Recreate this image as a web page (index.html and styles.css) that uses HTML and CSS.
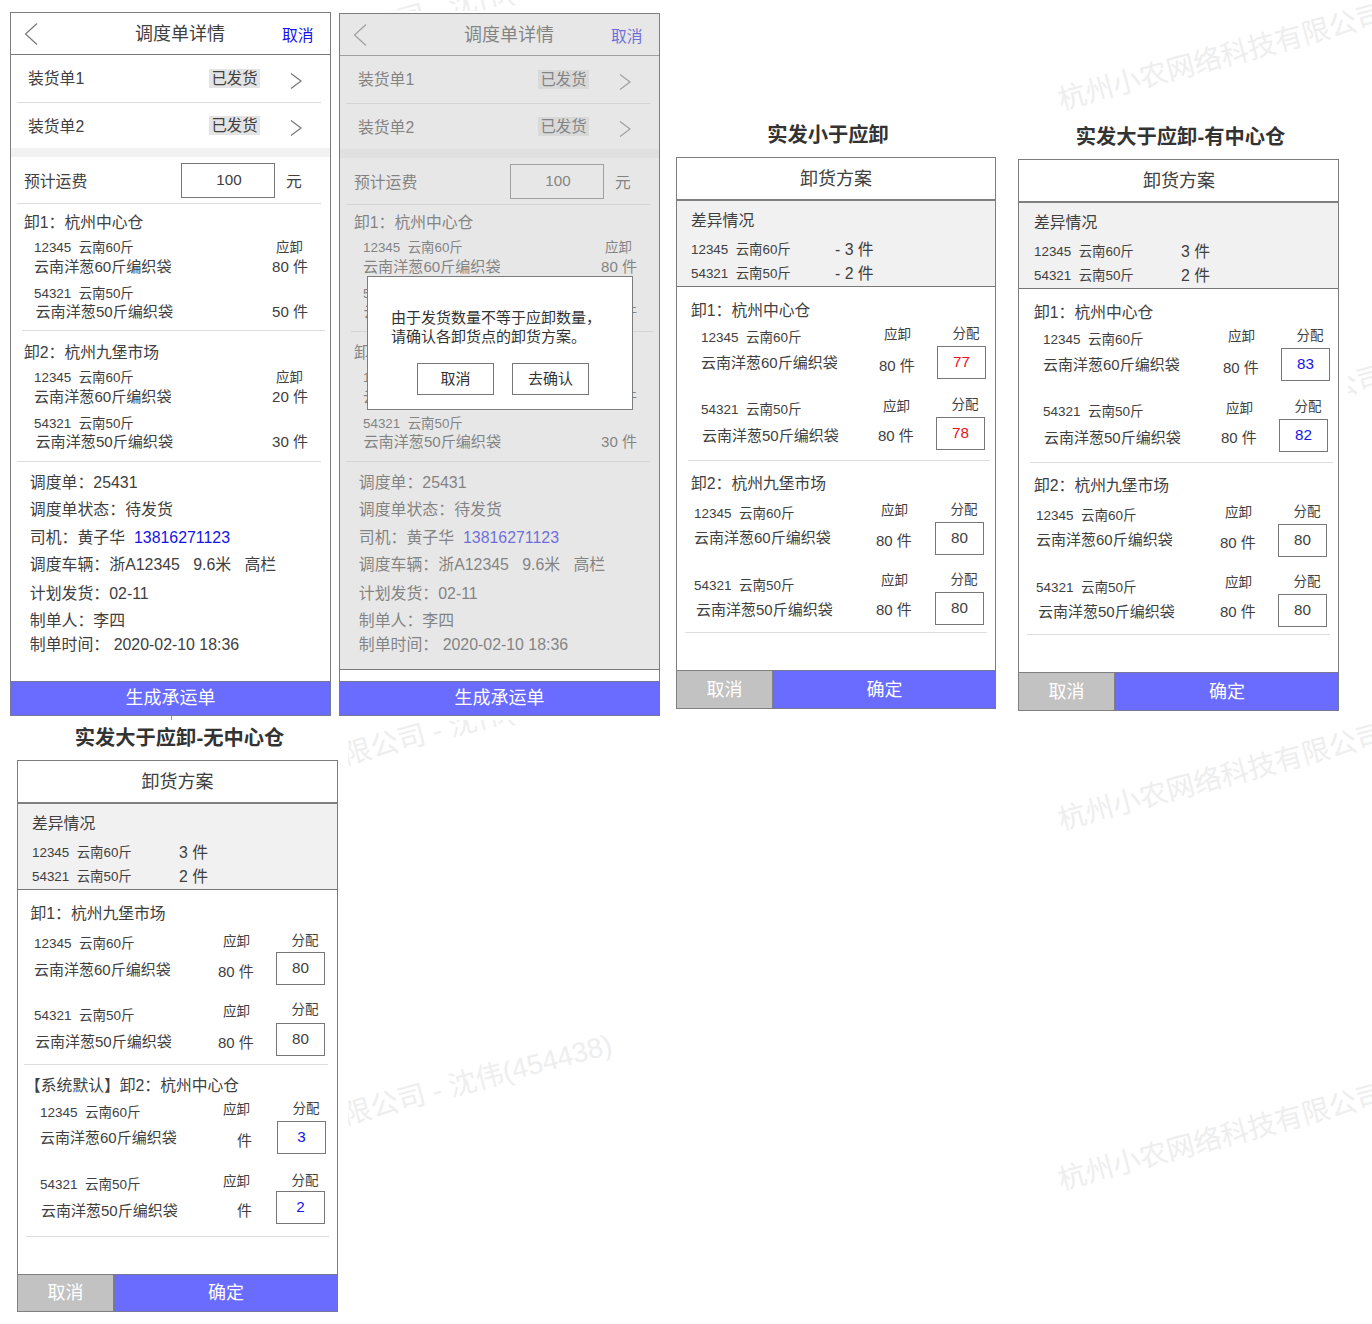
FILE: index.html
```html
<!DOCTYPE html>
<html lang="zh-CN">
<head>
<meta charset="utf-8">
<title>调度单详情</title>
<link rel="stylesheet" href="styles.css">
</head>
<body>
<div class="marks" aria-hidden="true">
  <div class="clip clip-top"><span class="mark">限公司 - 沈伟(454438)</span></div>
  <div class="clip clip-left"><span class="mark m1">限公司 - 沈伟(454438)</span><span class="mark m2">限公司 - 沈伟(454438)</span></div>
  <div class="clip clip-right"><span class="mark m1">杭州小农网络科技有限公司</span><span class="mark m2">杭州小农网络科技有限公司</span><span class="mark m3">杭州小农网络科技有限公司</span></div>
  <div class="clip clip-edge"><span class="mark">公司</span></div>
</div>

<main class="canvas">
  <div class="boards">
    <section class="phone order">
      <header class="bar">
        <svg class="back" viewBox="0 0 14 22"><path d="M13 .5 1.500 11 13 21.500"/></svg>
        <h2>调度单详情</h2><a class="cancel">取消</a>
      </header>
      <div class="load"><span>装货单1</span><em>已发货</em><svg class="go" viewBox="0 0 12 16"><path d="M1 .5 11 8 1 15.500"/></svg></div>
      <div class="load last"><span>装货单2</span><em>已发货</em><svg class="go" viewBox="0 0 12 16"><path d="M1 .5 11 8 1 15.500"/></svg></div>
      <div class="band"></div>
      <div class="fee"><span>预计运费</span><b>100</b><span>元</span></div>
      <div class="stop first">
        <h3>卸1：杭州中心仓</h3>
        <p class="code"><span>12345&nbsp; 云南60斤</span><span class="due">应卸</span></p>
        <p class="prod"><span>云南洋葱60斤编织袋</span><span class="qty">80 件</span></p>
        <p class="code two"><span>54321&nbsp; 云南50斤</span></p>
        <p class="prod two"><span>云南洋葱50斤编织袋</span><span class="qty">50 件</span></p>
      </div>
      <div class="stop second">
        <h3>卸2：杭州九堡市场</h3>
        <p class="code"><span>12345&nbsp; 云南60斤</span><span class="due">应卸</span></p>
        <p class="prod"><span>云南洋葱60斤编织袋</span><span class="qty">20 件</span></p>
        <p class="code two"><span>54321&nbsp; 云南50斤</span></p>
        <p class="prod two"><span>云南洋葱50斤编织袋</span><span class="qty">30 件</span></p>
      </div>
      <div class="info">
        <p>调度单：25431</p><p>调度单状态：待发货</p>
        <p>司机：黄子华&nbsp; <a>13816271123</a></p>
        <p>调度车辆：浙A12345&nbsp;&nbsp; 9.6米&nbsp;&nbsp; 高栏</p>
        <p>计划发货：02-11</p><p>制单人：李四</p><p>制单时间： 2020-02-10 18:36</p>
      </div>
      <div class="submit">生成承运单</div>
      <i class="tick"></i>
    </section>

    <section class="phone order dimmed">
      <header class="bar">
        <svg class="back" viewBox="0 0 14 22"><path d="M13 .5 1.500 11 13 21.500"/></svg>
        <h2>调度单详情</h2><a class="cancel">取消</a>
      </header>
      <div class="load"><span>装货单1</span><em>已发货</em><svg class="go" viewBox="0 0 12 16"><path d="M1 .5 11 8 1 15.500"/></svg></div>
      <div class="load last"><span>装货单2</span><em>已发货</em><svg class="go" viewBox="0 0 12 16"><path d="M1 .5 11 8 1 15.500"/></svg></div>
      <div class="band"></div>
      <div class="fee"><span>预计运费</span><b>100</b><span>元</span></div>
      <div class="stop first">
        <h3>卸1：杭州中心仓</h3>
        <p class="code"><span>12345&nbsp; 云南60斤</span><span class="due">应卸</span></p>
        <p class="prod"><span>云南洋葱60斤编织袋</span><span class="qty">80 件</span></p>
        <p class="code two"><span>54321&nbsp; 云南50斤</span></p>
        <p class="prod two"><span>云南洋葱50斤编织袋</span><span class="qty">50 件</span></p>
      </div>
      <div class="stop second">
        <h3>卸2：杭州九堡市场</h3>
        <p class="code"><span>12345&nbsp; 云南60斤</span><span class="due">应卸</span></p>
        <p class="prod"><span>云南洋葱60斤编织袋</span><span class="qty">20 件</span></p>
        <p class="code two"><span>54321&nbsp; 云南50斤</span></p>
        <p class="prod two"><span>云南洋葱50斤编织袋</span><span class="qty">30 件</span></p>
      </div>
      <div class="info">
        <p>调度单：25431</p><p>调度单状态：待发货</p>
        <p>司机：黄子华&nbsp; <a>13816271123</a></p>
        <p>调度车辆：浙A12345&nbsp;&nbsp; 9.6米&nbsp;&nbsp; 高栏</p>
        <p>计划发货：02-11</p><p>制单人：李四</p><p>制单时间： 2020-02-10 18:36</p>
      </div>
      <div class="submit">生成承运单</div>
      <div class="shade"></div>
      <div class="dialog">
        <p>由于发货数量不等于应卸数量，<br>请确认各卸货点的卸货方案。</p>
        <div class="choices"><span>取消</span><span>去确认</span></div>
      </div>
    </section>

    <section class="board less">
      <h1>实发小于应卸</h1>
      <div class="phone plan">
        <h2>卸货方案</h2>
        <div class="diff">
          <h3>差异情况</h3>
          <p><span>12345&nbsp; 云南60斤</span><b>- 3 件</b></p>
          <p><span>54321&nbsp; 云南50斤</span><b>- 2 件</b></p>
        </div>
        <div class="site">
          <h3>卸1：杭州中心仓</h3>
          <div class="item i1"><div class="name"><p>12345&nbsp; 云南60斤</p><p>云南洋葱60斤编织袋</p></div><div class="need"><p>应卸</p><p>80 件</p></div><div class="give"><p>分配</p><b class="red">77</b></div></div>
          <div class="item i2"><div class="name"><p>54321&nbsp; 云南50斤</p><p>云南洋葱50斤编织袋</p></div><div class="need"><p>应卸</p><p>80 件</p></div><div class="give"><p>分配</p><b class="red">78</b></div></div>
        </div>
        <div class="site end">
          <h3>卸2：杭州九堡市场</h3>
          <div class="item i3"><div class="name"><p>12345&nbsp; 云南60斤</p><p>云南洋葱60斤编织袋</p></div><div class="need"><p>应卸</p><p>80 件</p></div><div class="give"><p>分配</p><b>80</b></div></div>
          <div class="item i4"><div class="name"><p>54321&nbsp; 云南50斤</p><p>云南洋葱50斤编织袋</p></div><div class="need"><p>应卸</p><p>80 件</p></div><div class="give"><p>分配</p><b>80</b></div></div>
        </div>
        <footer><span>取消</span><span>确定</span></footer>
      </div>
    </section>

    <section class="board more">
      <h1>实发大于应卸-有中心仓</h1>
      <div class="phone plan">
        <h2>卸货方案</h2>
        <div class="diff">
          <h3>差异情况</h3>
          <p><span>12345&nbsp; 云南60斤</span><b>3 件</b></p>
          <p><span>54321&nbsp; 云南50斤</span><b>2 件</b></p>
        </div>
        <div class="site">
          <h3>卸1：杭州中心仓</h3>
          <div class="item i1"><div class="name"><p>12345&nbsp; 云南60斤</p><p>云南洋葱60斤编织袋</p></div><div class="need"><p>应卸</p><p>80 件</p></div><div class="give"><p>分配</p><b class="blue">83</b></div></div>
          <div class="item i2"><div class="name"><p>54321&nbsp; 云南50斤</p><p>云南洋葱50斤编织袋</p></div><div class="need"><p>应卸</p><p>80 件</p></div><div class="give"><p>分配</p><b class="blue">82</b></div></div>
        </div>
        <div class="site end">
          <h3>卸2：杭州九堡市场</h3>
          <div class="item i3"><div class="name"><p>12345&nbsp; 云南60斤</p><p>云南洋葱60斤编织袋</p></div><div class="need"><p>应卸</p><p>80 件</p></div><div class="give"><p>分配</p><b>80</b></div></div>
          <div class="item i4"><div class="name"><p>54321&nbsp; 云南50斤</p><p>云南洋葱50斤编织袋</p></div><div class="need"><p>应卸</p><p>80 件</p></div><div class="give"><p>分配</p><b>80</b></div></div>
        </div>
        <footer><span>取消</span><span>确定</span></footer>
      </div>
    </section>
  </div>

  <section class="board none">
    <h1>实发大于应卸-无中心仓</h1>
    <div class="phone plan">
      <h2>卸货方案</h2>
      <div class="diff">
        <h3>差异情况</h3>
        <p><span>12345&nbsp; 云南60斤</span><b>3 件</b></p>
        <p><span>54321&nbsp; 云南50斤</span><b>2 件</b></p>
      </div>
      <div class="site">
        <h3>卸1：杭州九堡市场</h3>
        <div class="item i1"><div class="name"><p>12345&nbsp; 云南60斤</p><p>云南洋葱60斤编织袋</p></div><div class="need"><p>应卸</p><p>80 件</p></div><div class="give"><p>分配</p><b>80</b></div></div>
        <div class="item i2"><div class="name"><p>54321&nbsp; 云南50斤</p><p>云南洋葱50斤编织袋</p></div><div class="need"><p>应卸</p><p>80 件</p></div><div class="give"><p>分配</p><b>80</b></div></div>
      </div>
      <div class="site end">
        <h3>【系统默认】卸2：杭州中心仓</h3>
        <div class="item i3"><div class="name"><p>12345&nbsp; 云南60斤</p><p>云南洋葱60斤编织袋</p></div><div class="need blank"><p>应卸</p><p>件</p></div><div class="give"><p>分配</p><b class="blue">3</b></div></div>
        <div class="item i4"><div class="name"><p>54321&nbsp; 云南50斤</p><p>云南洋葱50斤编织袋</p></div><div class="need blank"><p>应卸</p><p>件</p></div><div class="give"><p>分配</p><b class="blue">2</b></div></div>
      </div>
      <footer><span>取消</span><span>确定</span></footer>
    </div>
  </section>
</main>
</body>
</html>
```
FILE: styles.css
```css
* { box-sizing: border-box; margin: 0; padding: 0; }
body {
  position: relative;
  width: 1372px;
  height: 1324px;
  overflow: hidden;
  background: #fff;
  color: #404040;
  font: 16px/20px "Liberation Sans", "Noto Sans CJK SC", sans-serif;
  white-space: nowrap;
}
h2, h3, b, em, i { font-weight: 400; font-style: normal; }
h1 { color: #333; font-size: 20.3px; line-height: 24px; font-weight: 700; text-align: center; }
h2 { font-size: 18px; }
h3 { font-size: 15.8px; line-height: 20px; }
svg { fill: none; stroke: #777; stroke-width: 1.2; display: block; }

/* watermark */
.clip { position: absolute; overflow: hidden; }
.mark {
  position: absolute;
  font-size: 28px;
  line-height: 28px;
  color: #eee;
  transform: rotate(-15deg);
  transform-origin: 0 50%;
}
.clip-top { left: 348px; top: 0; width: 300px; height: 11px; }
.clip-top .mark { left: -4px; top: 22px; }
.clip-left { left: 348px; top: 720px; width: 300px; height: 460px; }
.clip-left .mark { left: -4px; }
.clip-left .m1 { top: 22px; }
.clip-left .m2 { top: 382px; }
.clip-right { left: 1040px; top: 0; width: 332px; height: 1324px; }
.clip-right .mark { left: 19px; }
.clip-right .m1 { top: 87px; }
.clip-right .m2 { top: 807px; }
.clip-right .m3 { top: 1167px; }
.clip-edge { left: 1348px; top: 340px; width: 24px; height: 70px; }
.clip-edge .mark { left: -18px; top: 36px; }

/* canvas */
.canvas { position: relative; }
.boards { display: flex; align-items: flex-start; height: 725px; padding-left: 10px; }
.phone {
  position: relative;
  display: flex;
  flex-direction: column;
  width: 321px;
  background: #fff;
  border: 1px solid #7d7d7d;
}

/* dispatch order */
.order { height: 704px; margin: 12px 8px 0 0; }
.dimmed { height: 703px; margin: 13px 16px 0 0; }
.bar { display: flex; align-items: center; height: 42px; border-bottom: 1px solid #777; }
.back { width: 14px; height: 22px; margin-left: 13px; }
.bar h2 { margin-left: 97px; width: 91px; line-height: 24px; }
.cancel { margin: 4px 0 0 56px; color: #1414e6; font-size: 15.8px; }
.load {
  display: flex; align-items: center; height: 48px;
  margin: 0 9px 0 6px; padding-left: 11px;
  border-bottom: 1px solid #ddd; font-size: 15.8px;
}
.load span { width: 181px; padding-top: 1px; }
.load em { width: 51px; height: 19px; background: #e4e4e4; text-align: center; font-size: 15.4px; line-height: 19px; }
.load .go { width: 12px; height: 16px; margin: 5px 0 0 30px; }
.load.last { height: 45px; border: 0; }
.load.last span { padding-top: 3px; }
.band { height: 9px; background: #f2f2f2; }
.fee { display: flex; align-items: center; height: 47px; margin: 0 9px 0 6px; padding-left: 7px; border-bottom: 1px solid #ddd; font-size: 15.8px; }
.fee span { padding-top: 4px; }
.fee span:first-child { width: 157px; }
.fee b { width: 94px; height: 35px; margin-right: 11px; border: 1px solid #777; text-align: center; font-size: 15.2px; line-height: 32px; padding-left: 2px; }
.stop { height: 127px; margin: 0 5px 0 11px; padding: 9px 0 0 2px; border-bottom: 1px solid #ddd; }
.stop.second { height: 131px; margin: 0 9px 0 6px; padding: 12px 0 0 7px; }
.stop p { display: flex; height: 18px; line-height: 18px; padding-left: 10px; }
.code { font-size: 13.4px; margin-top: 6px; }
.code span:first-child { width: 242px; }
.prod { font-size: 15.1px; margin-top: 1px; }
.prod span:first-child { width: 238px; }
.code.two { margin-top: 9px; }
.prod.two { margin-top: 0; }
.prod.two span:first-child { padding-left: 1.5px; }
.info { padding: 9px 0 0 18.800px; }
.info p { height: 24px; line-height: 24px; font-size: 15.9px; margin-bottom: 3px; }
.info p:nth-child(2) { margin-bottom: 4px; }
.info p:nth-child(4) { margin-bottom: 5px; }
.info p:nth-child(6) { margin-bottom: 0; }
.info a { color: #1414e6; }
.submit { margin: auto -1px -1px; height: 35px; border: 1px solid #77779a; background: #696cff; color: #fff; text-align: center; font-size: 18px; line-height: 33px; }
.tick { position: absolute; left: 160px; bottom: -5px; width: 1px; height: 4px; background: #999; }
.dimmed .load { padding-left: 12px; }
.dimmed .load span { width: 180px; }
.dimmed .fee { padding-left: 8px; }
.dimmed .fee span:first-child { width: 156px; }
.dimmed .stop h3 { padding-left: 1px; }
.dimmed .stop.first { padding-top: 8px; }
.dimmed .stop.second { height: 130px; padding-top: 11px; }
.dimmed .prod.two span:first-child { padding-left: .5px; }
.shade { position: absolute; inset: 0 0 45px; background: rgba(205, 205, 205, .48); border-bottom: 1px solid #777; }
.dialog { position: absolute; left: 27px; top: 262px; width: 266px; height: 134px; padding: 32px 0 0 23px; background: #fff; border: 1px solid #7d7d7d; color: #333; font-size: 15px; line-height: 18.500px; }
.choices { display: flex; gap: 18px; margin: 17px 0 0 26px; }
.choices span { width: 77px; height: 32px; border: 1px solid #777; text-align: center; line-height: 30px; }

/* unloading plan */
.less { width: 320px; margin: 123px 22px 0 0; }
.less .phone { width: 320px; }
.less h1 { padding-right: 16px; }
.more { width: 321px; margin-top: 125px; }
.more h1 { padding-left: 4px; }
.none { position: relative; width: 321px; margin: 1px 0 0 17px; }
.none h1 { padding-left: 4px; }
.less h1, .more h1, .none h1 { margin-bottom: 10px; }
.plan { height: 552px; }
.plan h2 { height: 43px; line-height: 40px; padding-top: 1px; text-align: center; border-bottom: 2px solid #808080; }
.diff { height: 86px; padding: 10px 0 0 14px; background: #f1f1f1; border-bottom: 1px solid #777; }
.diff p { display: flex; margin-top: 4px; line-height: 20px; font-size: 13.4px; }
.diff h3 + p { margin-top: 9px; }
.diff span { width: 149px; }
.diff b { font-size: 15.8px; }
.less .diff span { width: 144px; }
.none .diff span { width: 147px; }
.site { height: 174px; padding-top: 14px; }
.site.end { padding-top: 13px; height: 172px; }
.site::after { content: ""; display: block; height: 1px; margin: 9px 5px 0 11px; background: #ddd; }
.site.end::after { margin: 5px 8px 0; }
.site h3 { padding-left: 14px; }
.item {
  display: grid;
  grid-template-columns: calc(var(--need) - var(--name)) calc(var(--give) - var(--need)) 49px;
  height: 57px;
  margin-top: 15px;
  padding-left: var(--name);
}
.item p { height: 18px; line-height: 18px; font-size: 13.5px; }
.item p + p { font-size: 15px; }
.name { padding-top: 6px; }
.name p + p { margin-top: 8px; }
.need { padding-top: 3px; }
.need p:first-child { padding-left: 5px; }
.need p + p { margin-top: 13px; }
.give { padding-top: 3px; }
.give p { padding-left: 15.500px; }
.give b { display: block; width: 49px; height: 33px; margin-top: 3px; border: 1px solid #777; text-align: center; font-size: 15.2px; line-height: 30px; }
.red { color: #e8101c; }
.blue { color: #1414e6; }
.i1 { --name: 24px; --need: 202px; --give: 260px; margin-top: 1px; }
.i2 { --name: 24px; --need: 201px; --give: 259px; }
.i3 { --name: 17px; --need: 199px; --give: 258px; margin-top: 4px; }
.i4 { --name: 17px; --need: 199px; --give: 258px; }
.i1 .name, .i2 .name, .i3 .name, .i4 .name { padding-top: 7px; }
.i1 .name p + p { margin-top: 7px; }
.i1 .need, .i2 .need, .i3 .need { padding-top: 4px; }
.i1 .need p + p { margin-top: 13px; }
.i2 .name p + p { margin-top: 8px; padding-left: 1px; }
.i2 .need p + p { margin-top: 11px; }
.i2 .give { padding-top: 2px; }
.i3 .name p + p, .i4 .name p + p { margin-top: 6px; }
.i3 .need p + p { margin-top: 12px; }
.i4 .name p + p { padding-left: 2px; }
.i4 .need { padding-top: 2px; }
.i4 .need p + p { margin-top: 11px; }
.i4 .give { padding-top: 1px; }
.more .plan h2 { padding-left: 1px; }
.more .diff, .more .site h3 { padding-left: 15px; }
.more .diff span { width: 147px; }
.more .i1 { --name: 24px; --need: 204px; --give: 262px; }
.more .i2 { --name: 24px; --need: 202px; --give: 260px; }
.more .i3, .more .i4 { --name: 17px; --need: 201px; --give: 259px; }
footer { display: grid; grid-template: 100% / 97px 1fr; height: 39px; margin: auto -1px -1px; color: #fff; font-size: 18px; line-height: 36px; text-align: center; }
footer span { padding-top: 1px; border: 1px solid #77779a; background: #696cff; }
footer span:first-child { background: #c2c2c2; border-color: #808080; }

.none .plan h2 { padding-left: 0; }
.none .site { height: 175px; padding-top: 14px; }
.none .site.end { height: 172px; padding-top: 11px; }
.none .site::after { margin: 7px 9px 0 6px; }
.none .site.end::after { margin: 10px 8px 0; }
.none .site h3 { padding-left: 12.500px; }
.none .site.end h3 { padding-left: 7px; }
.none .i1 { --name: 16px; --need: 200px; --give: 258px; margin-top: 4px; }
.none .i2 { --name: 16px; --need: 200px; --give: 258px; }
.none .i3 { --name: 22px; --need: 200px; --give: 259px; margin-top: 1px; }
.none .i4 { --name: 22px; --need: 200px; --give: 258px; }
.none .i1 .need { padding-top: 5px; }
.none .i1 .need p + p { margin-top: 12px; }
.none .i1 .give { padding-top: 4px; }
.none .i1 .give b { margin-top: 2px; }
.none .i1 .name p + p { margin-top: 8px; }
.none .i2 .need { padding-top: 3px; }
.none .i2 .need p + p { margin-top: 13px; }
.none .i2 .give { padding-top: 1px; }
.none .i2 .give b { margin-top: 4px; }
.none .i3 .name p + p { margin-top: 7px; }
.none .i3 .need p + p { margin-top: 13px; }
.none .i4 .name p + p { margin-top: 8px; padding-left: 1px; }
.none .i4 .need { padding-top: 4px; }
.none .i4 .need p + p { margin-top: 11px; }
.none .i4 .give { padding-top: 3px; }
.none .i4 .give b { margin-top: 1px; }
.need.blank p + p { padding-left: 19px; }
.none footer { height: 38px; line-height: 35px; }
```
